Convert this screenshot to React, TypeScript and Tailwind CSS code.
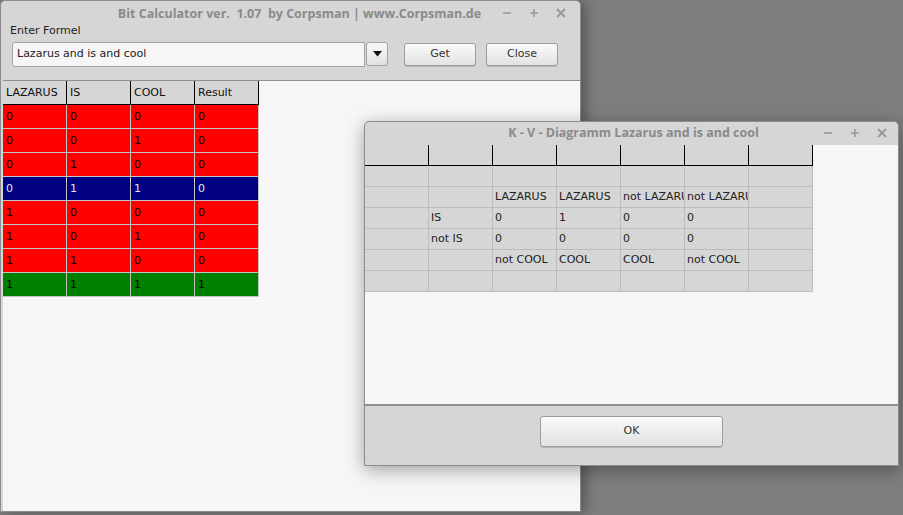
import React from "react";

const UI = { fontFamily: '"DejaVu Sans", "Open Sans", sans-serif' };
const TITLE = { fontFamily: '"Open Sans", "DejaVu Sans", sans-serif' };

const ROWS: { bits: string[]; tone: "red" | "blue" | "green" }[] = [
  { bits: ["0", "0", "0", "0"], tone: "red" },
  { bits: ["0", "0", "1", "0"], tone: "red" },
  { bits: ["0", "1", "0", "0"], tone: "red" },
  { bits: ["0", "1", "1", "0"], tone: "blue" },
  { bits: ["1", "0", "0", "0"], tone: "red" },
  { bits: ["1", "0", "1", "0"], tone: "red" },
  { bits: ["1", "1", "0", "0"], tone: "red" },
  { bits: ["1", "1", "1", "1"], tone: "green" },
];

const KV: string[][] = [
  ["", "", "", "", "", "", ""],
  ["", "", "LAZARUS", "LAZARUS", "not LAZARUS", "not LAZARUS", ""],
  ["", "IS", "0", "1", "0", "0", ""],
  ["", "not IS", "0", "0", "0", "0", ""],
  ["", "", "not COOL", "COOL", "COOL", "not COOL", ""],
  ["", "", "", "", "", "", ""],
];

function TitleButtons() {
  return (
    <div className="flex items-center gap-[13px] text-[#9a9a9a]">
      <svg width="14" height="14" viewBox="0 0 14 14">
        <path d="M3 7h8" stroke="currentColor" strokeWidth="1.6" />
      </svg>
      <svg width="14" height="14" viewBox="0 0 14 14">
        <path d="M3 7h8M7 3v8" stroke="currentColor" strokeWidth="1.6" />
      </svg>
      <svg width="14" height="14" viewBox="0 0 14 14">
        <path d="M3 3l8 8M11 3l-8 8" stroke="currentColor" strokeWidth="2" />
      </svg>
    </div>
  );
}

function Btn({ label, w, h }: { label: string; w: string; h: string }) {
  return (
    <button
      style={UI}
      className={`${w} ${h} rounded-[3px] border border-[#9c9c9c] bg-gradient-to-b from-[#fafafa] to-[#e2e2e2] text-[11px] text-[#333] shadow-[0_1px_0_rgba(0,0,0,0.15)]`}
    >
      {label}
    </button>
  );
}

function MainWindow() {
  const cell = (tone: string) =>
    tone === "blue"
      ? "bg-[#000080] text-[#e6e6e6]"
      : tone === "green"
        ? "bg-[#008000] text-black"
        : "bg-[#ff0000] text-black";
  return (
    <div className="absolute left-0 top-0 w-[581px] h-[512px] flex flex-col rounded-t-[5px] border border-[#8c8c8c] bg-[#d6d6d6] shadow-[4px_0_14px_rgba(0,0,0,0.35)]">
      <div className="h-[26px] flex items-center relative">
        <div style={TITLE} className="flex-1 text-center text-[12.5px] font-bold text-[#8a8a8a] pl-[18px]">
          Bit Calculator ver.&nbsp; 1.07&nbsp; by Corpsman | www.Corpsman.de
        </div>
        <div className="absolute right-[12px] top-[5px]">
          <TitleButtons />
        </div>
      </div>
      <div className="pl-[9px] text-[11px] text-[#222] leading-[14px] -mt-[3px]">Enter Formel</div>
      <div className="flex items-center mt-[3px] pl-[11px] h-[26px]">
        <div className="w-[353px] h-[25px] flex items-center rounded-l-[3px] border border-[#a3a3a3] bg-[#f6f6f6] pl-[4px] text-[11px] text-[#222]">
          Lazarus and is and cool
        </div>
        <div className="ml-[1px] w-[22px] h-[24px] flex items-center justify-center rounded-[3px] border border-[#a3a3a3] bg-gradient-to-b from-[#f8f8f8] to-[#e2e2e2]">
          <svg width="9" height="6" viewBox="0 0 9 6">
            <path d="M0 0h9L4.5 5.5z" fill="#111" />
          </svg>
        </div>
        <div className="ml-[16px] -mt-[2px]">
          <Btn label="Get" w="w-[72px]" h="h-[23px]" />
        </div>
        <div className="ml-[10px] -mt-[2px]">
          <Btn label="Close" w="w-[72px]" h="h-[23px]" />
        </div>
      </div>
      <div className="mt-[13px] flex-1 border-t border-[#8f8f8f] bg-[#f6f6f6] ml-[2px]">
        <div className="flex">
          {["LAZARUS", "IS", "COOL", "Result"].map((h) => (
            <div
              key={h}
              className="w-[64px] h-[24px] flex items-center pl-[3px] pt-[1px] text-[11px] text-[#111] bg-[#d6d6d6] border-r border-b border-black"
            >
              {h}
            </div>
          ))}
        </div>
        {ROWS.map((r, i) => (
          <div key={i} className="flex">
            {r.bits.map((b, j) => (
              <div
                key={j}
                className={`w-[64px] h-[24px] flex items-center pl-[3px] pt-[1px] text-[11px] border-r border-b border-[#c4c4c4] ${cell(r.tone)}`}
              >
                {b}
              </div>
            ))}
          </div>
        ))}
      </div>
    </div>
  );
}

function KVWindow() {
  return (
    <div className="absolute left-[364px] top-[121px] w-[535px] h-[345px] flex flex-col rounded-t-[5px] border border-[#8c8c8c] bg-[#d6d6d6] shadow-[0_4px_18px_rgba(0,0,0,0.35)]">
      <div className="h-[23px] flex items-center relative">
        <div style={TITLE} className="flex-1 text-center text-[12.5px] font-bold text-[#8a8a8a] pl-[4px]">
          K - V - Diagramm Lazarus and is and cool
        </div>
        <div className="absolute right-[9px] top-[4px]">
          <TitleButtons />
        </div>
      </div>
      <div className="flex-1 bg-[#f6f6f6]">
        <div className="flex">
          {Array.from({ length: 7 }).map((_, j) => (
            <div key={j} className="w-[64px] h-[21px] bg-[#d6d6d6] border-r border-b border-black" />
          ))}
        </div>
        {KV.map((row, i) => (
          <div key={i} className="flex">
            {row.map((t, j) => (
              <div
                key={j}
                className="w-[64px] h-[21px] flex items-center pl-[2px] bg-[#d6d6d6] border-r border-b border-[#bcbcbc] text-[11px] text-[#222] whitespace-nowrap overflow-hidden"
              >
                {t}
              </div>
            ))}
          </div>
        ))}
      </div>
      <div className="h-[61px] border-t-2 border-[#8f8f8f] flex justify-center pt-[10px]">
        <Btn label="OK" w="w-[183px]" h="h-[31px]" />
      </div>
    </div>
  );
}

export default function App() {
  return (
    <div className="relative w-[903px] h-[515px] overflow-hidden bg-[#7e7e7e]" style={UI}>
      <MainWindow />
      <KVWindow />
    </div>
  );
}
